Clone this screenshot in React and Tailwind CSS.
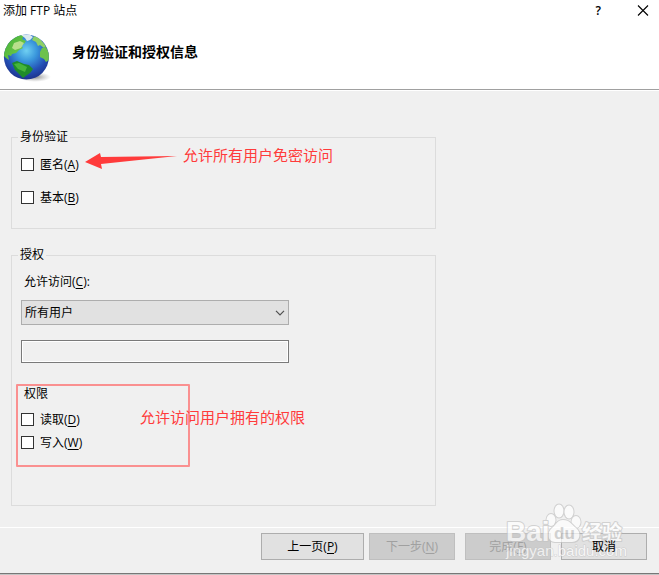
import React, { useState } from "react";

const GlobeIcon = () => (
  <svg width="52" height="52" viewBox="0 0 52 52" aria-hidden="true">
    <defs>
      <radialGradient id="ocean" cx="0.5" cy="0.36" r="0.66">
        <stop offset="0" stopColor="#6fd0f2" />
        <stop offset="0.35" stopColor="#3a97dc" />
        <stop offset="0.7" stopColor="#2450b6" />
        <stop offset="1" stopColor="#1c2f88" />
      </radialGradient>
      <radialGradient id="shade">
        <stop offset="0" stopColor="#555" stopOpacity="0.7" />
        <stop offset="1" stopColor="#999" stopOpacity="0" />
      </radialGradient>
      <linearGradient id="land" x1="0" y1="0" x2="1" y2="1">
        <stop offset="0" stopColor="#3fae34" />
        <stop offset="1" stopColor="#7ccf4e" />
      </linearGradient>
      <clipPath id="disc">
        <circle cx="25.4" cy="26" r="22.5" />
      </clipPath>
    </defs>
    <ellipse cx="34" cy="46" rx="16" ry="5" fill="url(#shade)" />
    <circle cx="25.4" cy="26" r="22.5" fill="url(#ocean)" />
    <g clipPath="url(#disc)">
      <path
        d="M2 24 Q4 8 18 3 L23 5 L21 8 L25 10 L23 13 L20 14 L22 17 L18 19 L15 22 L11 23 L10 25 L7 24 L8 29 L5 27Z"
        fill="url(#land)"
      />
      <path d="M13 12 L19 10 L23 12 L20 17 L14 19 L11 17Z" fill="#b9df8b" />
      <path d="M20 4 L28 3 L32 6 L29 9 L26 10 L24 7Z" fill="#d9e9ef" />
      <path
        d="M33 5 L38 7 L45 15 L43 17 L39 14 L37 15 L35 11 L31 9Z"
        fill="#8ed065"
      />
      <path
        d="M41 17 L45 16 L48 22 L48 29 L45 31 L43 28 L39 26 L39 21Z"
        fill="#6cc24d"
      />
      <path
        d="M11 32 L16 30 L23 33 L28 34 L32 38 L29 42 L26 44 L22 47 L18 43 L14 39Z"
        fill="#1f8c29"
      />
      <path d="M13 33 L18 32 L26 36 L24 41 L17 38Z" fill="#46b53b" />
    </g>
  </svg>
);

const Watermark = () => (
  <svg
    width="124"
    height="68"
    viewBox="0 0 124 68"
    aria-hidden="true"
    className="pointer-events-none absolute right-[30px] bottom-[7px] opacity-70"
  >
    <g
      fill="#fff"
      stroke="#c4c4c4"
      strokeWidth="2"
      strokeLinejoin="round"
      paintOrder="stroke"
    >
      <ellipse cx="46" cy="21" rx="4.5" ry="6" />
      <ellipse cx="54" cy="12" rx="4.5" ry="6.5" />
      <ellipse cx="64" cy="13" rx="4.5" ry="6.5" />
      <ellipse cx="71" cy="23" rx="4.5" ry="6" />
      <path d="M58 21 C65 21 67 26 71 29 C77 34 75 43 67 43 L50 43 C43 43 41 34 47 29 C51 26 52 21 58 21Z" />
      <g className="font-['Liberation_Sans','Noto_Sans_CJK_SC',sans-serif] font-bold">
        <text x="1" y="42" fontSize="28">
          Bai
        </text>
        <text x="77" y="41" fontSize="20">
          经验
        </text>
      </g>
      <text
        x="1"
        y="57"
        fontSize="15"
        strokeWidth="1"
        className="font-['Liberation_Sans',sans-serif]"
      >
        jingyan.baidu.com
      </text>
    </g>
    <text
      x="49"
      y="40"
      fontSize="17"
      fill="#c4c4c4"
      className="font-['Liberation_Sans',sans-serif] font-bold"
    >
      du
    </text>
  </svg>
);

const Label = ({ text, hotkey, suffix = "" }) => (
  <span>
    {text}(<span className="underline underline-offset-2">{hotkey}</span>)
    {suffix}
  </span>
);

const CheckRow = ({ text, hotkey }) => (
  <label className="flex h-[17px] w-fit items-center gap-1.5">
    <input
      type="checkbox"
      className="size-[13px] appearance-none border border-[#333] bg-white checked:bg-[#333]"
    />
    <Label text={text} hotkey={hotkey} />
  </label>
);

const Group = ({ title, children }) => (
  <fieldset className="w-full max-w-[425px] border border-[#dcdcdc] px-[9px]">
    <legend className="-ml-[3px] px-0.5">{title}</legend>
    <div className="pt-[11px]">{children}</div>
  </fieldset>
);

const App = () => {
  const [access, setAccess] = useState("all");

  return (
    <div className="relative border-b border-[#c4c4c4] bg-[#f0f0f0] font-['Open_Sans','Noto_Sans_CJK_SC',sans-serif] text-xs leading-4 text-black">
      <header className="border-b border-[#a0a0a0] bg-white">
        <div className="flex h-[21px] items-center justify-between pr-2.5 pl-[3px]">
          <h1>添加 FTP 站点</h1>
          <div className="flex items-center gap-9">
            <button type="button" aria-label="帮助" className="font-semibold">
              ?
            </button>
            <button type="button" aria-label="关闭">
              <svg width="12" height="12" viewBox="0 0 12 12">
                <path
                  d="M1 0.5 L11 10.5 M11 0.5 L1 10.5"
                  stroke="#000"
                  strokeWidth="1.1"
                />
              </svg>
            </button>
          </div>
        </div>
        <div className="flex h-[68px] items-start gap-[19px] pt-2.5 pl-px">
          <GlobeIcon />
          <h2 className="pt-[11px] text-sm leading-5 font-bold">
            身份验证和授权信息
          </h2>
        </div>
      </header>

      <main className="flex flex-col gap-[18px] border-t border-white px-[11px] pt-[38px] pb-[21px]">
        <Group title="身份验证">
          <div className="relative flex flex-col gap-4 pb-[22px]">
            <CheckRow text="匿名" hotkey="A" />
            <CheckRow text="基本" hotkey="B" />
            <div className="absolute -top-[13px] left-16 flex items-center gap-1.5 text-[15px] leading-6 text-[#ff3b3b]">
              <svg
                width="92"
                height="20"
                viewBox="0 0 92 20"
                aria-hidden="true"
                className="mt-2.5"
              >
                <path
                  d="M0 9 L15 0 L16 4 L92 3 L16 11 L17 16Z"
                  fill="#ff3b3b"
                />
              </svg>
              <span className="-mt-1.5">允许所有用户免密访问</span>
            </div>
          </div>
        </Group>

        <Group title="授权">
          <label htmlFor="access" className="block pl-[3px]">
            <Label text="允许访问" hotkey="C" suffix=":" />
          </label>
          <div className="relative mt-2.5 w-full max-w-[268px]">
            <select
              id="access"
              value={access}
              onChange={(e) => setAccess(e.target.value)}
              className="block h-[25px] w-full appearance-none border border-[#adadad] bg-[#e1e1e1] px-[3px]"
            >
              <option value="all">所有用户</option>
            </select>
            <svg
              width="10"
              height="6"
              viewBox="0 0 10 6"
              aria-hidden="true"
              className="pointer-events-none absolute top-2.5 right-1"
            >
              <path
                d="M1 0.8 L5 4.8 L9 0.8"
                fill="none"
                stroke="#505050"
                strokeWidth="1.2"
              />
            </svg>
          </div>
          <input
            type="text"
            aria-label="用户或组"
            disabled
            className="mt-[15px] block h-[23px] w-full max-w-[268px] border border-[#7a7a7a] bg-[#f0f0f0] px-1 ring-1 ring-white ring-inset"
          />
          <div className="relative mt-[22px] mb-[54px]">
            <h3 className="pt-px pl-[3px]">权限</h3>
            <div className="mt-[9px] flex flex-col gap-1.5">
              <CheckRow text="读取" hotkey="D" />
              <CheckRow text="写入" hotkey="W" />
            </div>
            <div className="pointer-events-none absolute -top-px -bottom-4 -left-[5px] w-[174px] rounded-[1px] border-2 border-[#fa9090]" />
            <span className="absolute top-5 left-[119px] text-[15px] leading-6 text-[#ff3b3b]">
              允许访问用户拥有的权限
            </span>
          </div>
        </Group>
      </main>

      <footer className="flex justify-end border-t border-b border-t-white border-b-[#777] pt-[5px] pr-3 pb-[13px]">
        <button
          type="button"
          className="mr-[5px] h-[27px] w-[103px] border border-[#adadad] bg-[#e1e1e1]"
        >
          <Label text="上一页" hotkey="P" />
        </button>
        <button
          type="button"
          disabled
          className="mr-2.5 h-[27px] w-[86px] border border-[#bfbfbf] bg-[#ccc] text-[#a0a0a0]"
        >
          <Label text="下一步" hotkey="N" />
        </button>
        <button
          type="button"
          disabled
          className="mr-2.5 h-[27px] w-[86px] border border-[#bfbfbf] bg-[#ccc] text-[#a0a0a0]"
        >
          <Label text="完成" hotkey="F" />
        </button>
        <button
          type="button"
          className="h-[27px] w-[86px] border border-[#adadad] bg-[#e1e1e1]"
        >
          <span className="relative z-10">取消</span>
        </button>
      </footer>
      <Watermark />
    </div>
  );
};

export default App;
